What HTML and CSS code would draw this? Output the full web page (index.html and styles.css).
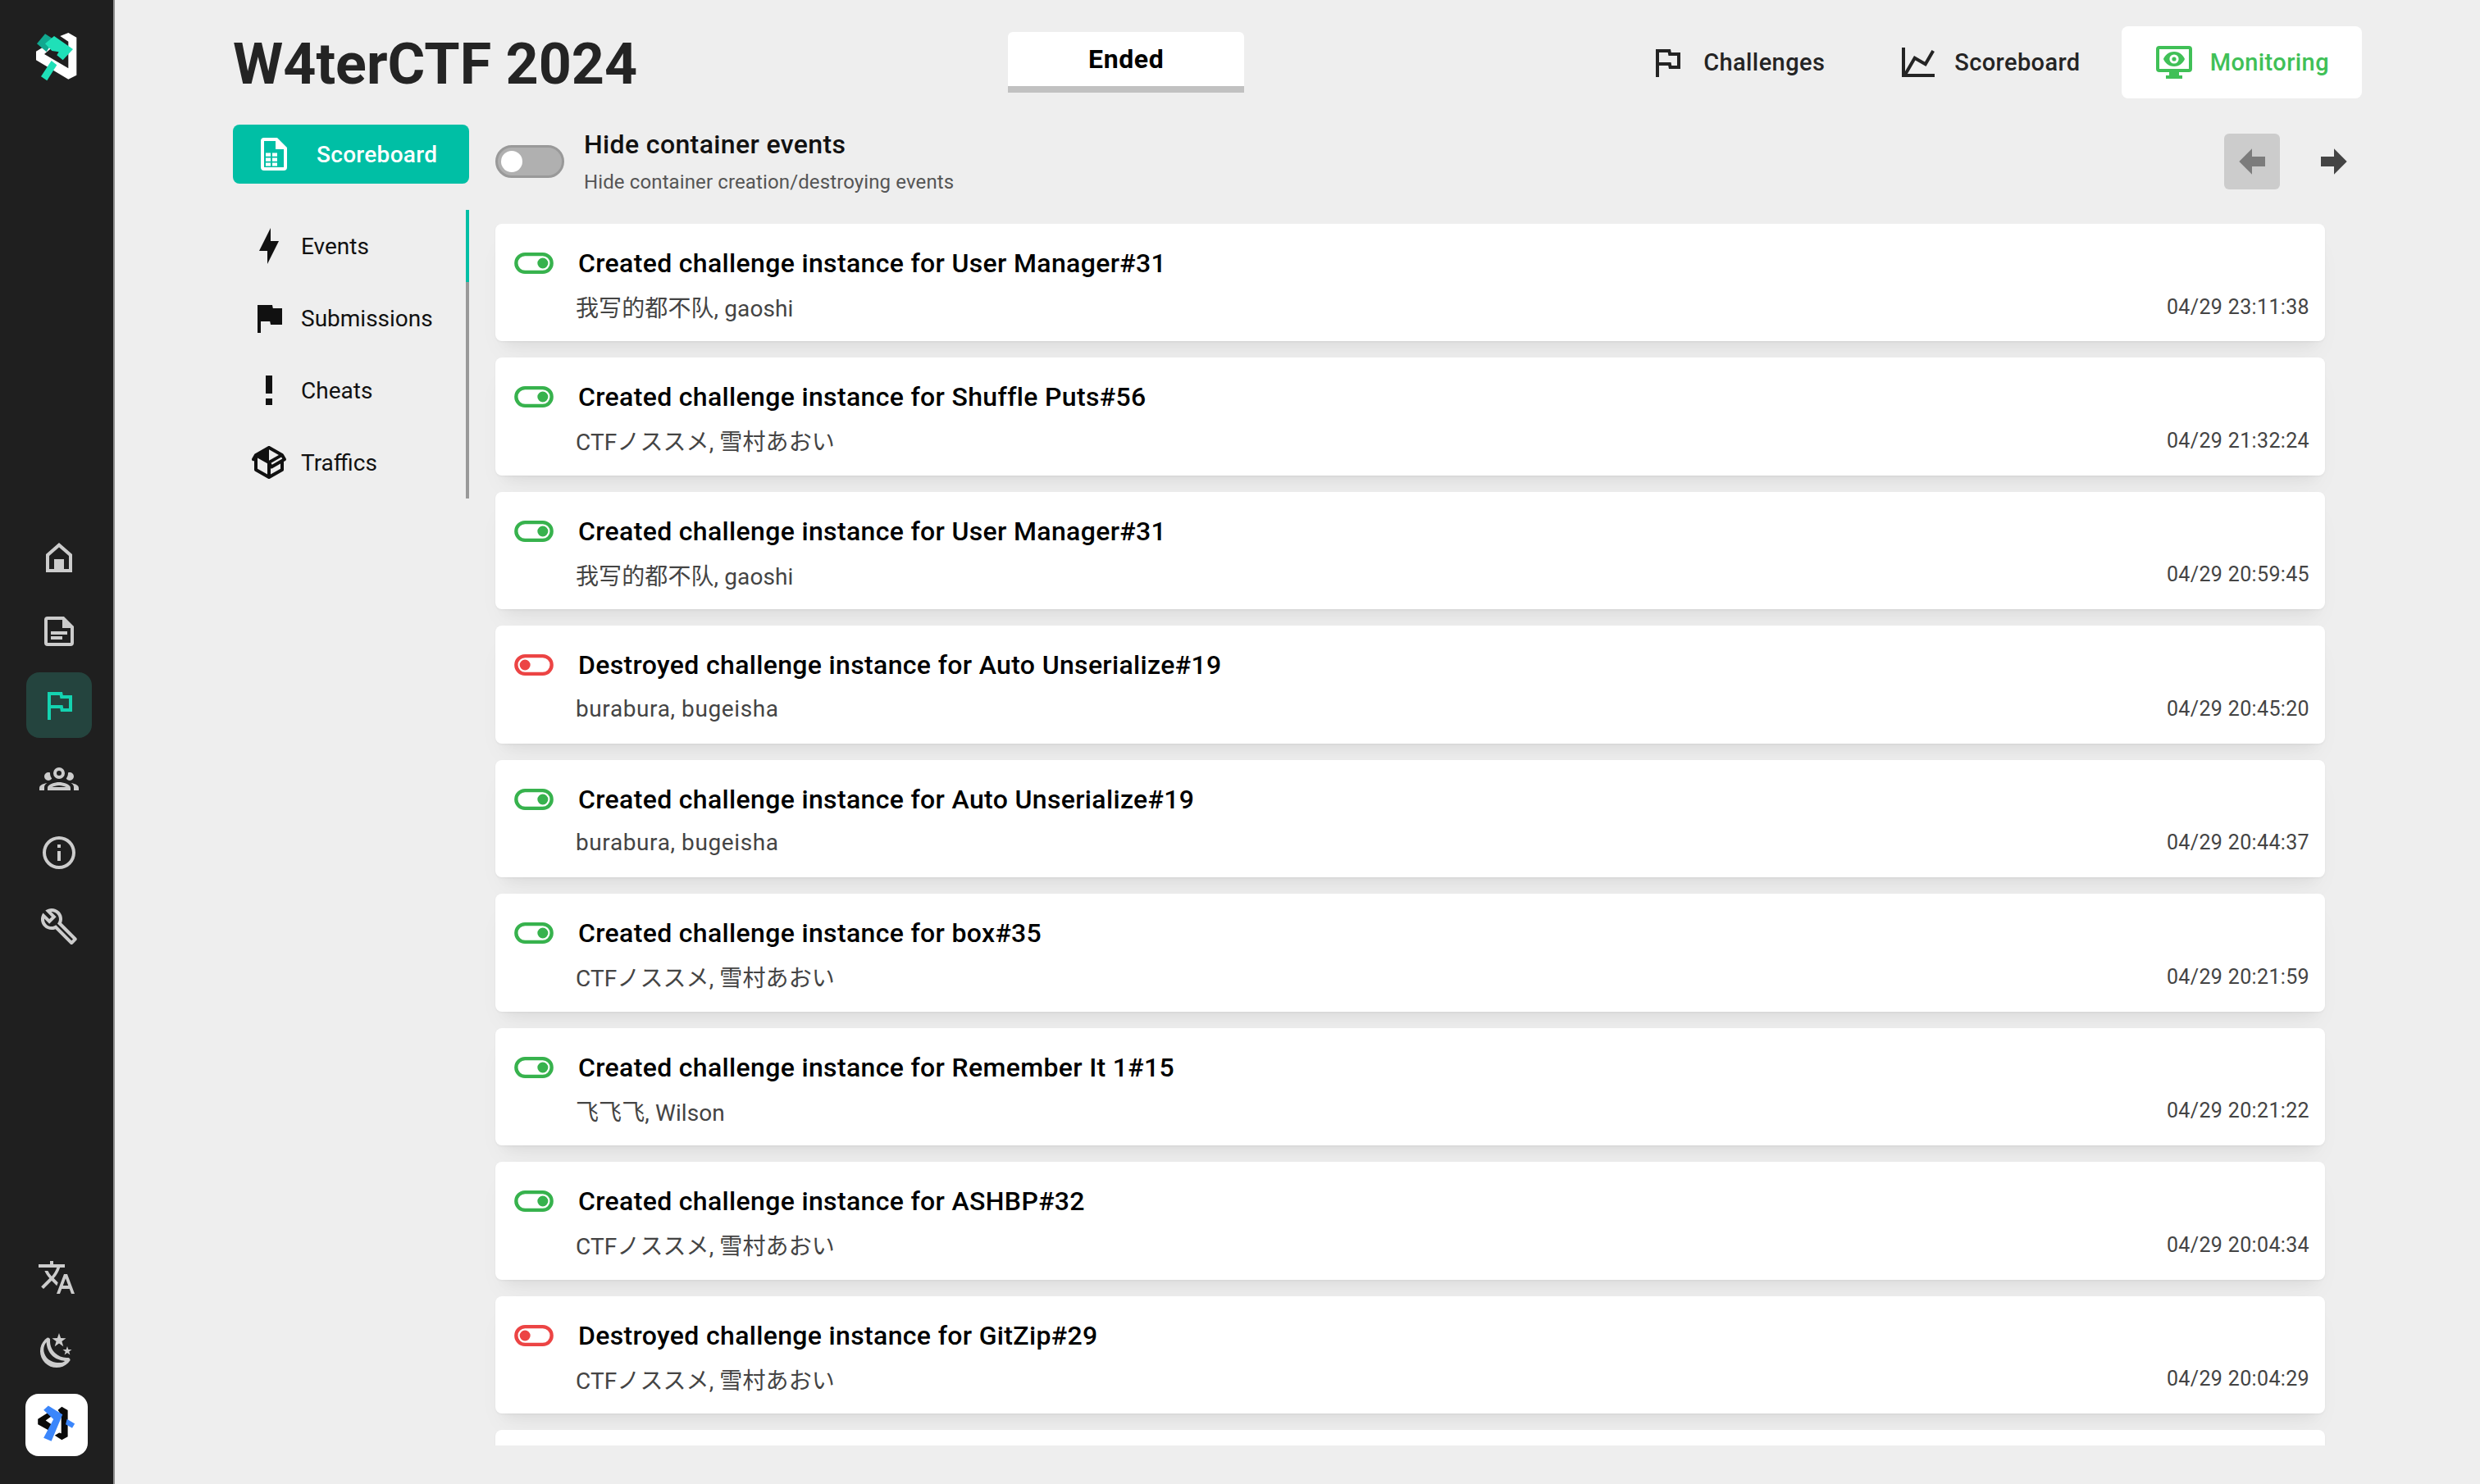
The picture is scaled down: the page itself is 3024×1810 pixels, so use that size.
FILE: index.html
```html
<!DOCTYPE html>
<html lang="en">
<head>
<meta charset="utf-8">
<title>W4terCTF 2024 - Monitoring</title>
<link rel="stylesheet" href="styles.css">
</head>
<body>
<svg class="defs" width="0" height="0" aria-hidden="true">
  <symbol id="tog-on" viewBox="0 0 24 24"><path fill-rule="evenodd" d="M7 6H17A6 6 0 0 1 17 18H7A6 6 0 0 1 7 6ZM7 8A4 4 0 0 0 7 16H17A4 4 0 0 0 17 8ZM17 9A3 3 0 1 1 17 15A3 3 0 1 1 17 9Z"/></symbol>
  <symbol id="tog-off" viewBox="0 0 24 24"><path fill-rule="evenodd" d="M7 6H17A6 6 0 0 1 17 18H7A6 6 0 0 1 7 6ZM7 8A4 4 0 0 0 7 16H17A4 4 0 0 0 17 8ZM7 9A3 3 0 1 1 7 15A3 3 0 1 1 7 9Z"/></symbol>
</svg>
<div class="app">
  <aside class="rail">
    <div class="rail-top">
      <svg class="logo" viewBox="0 0 240 240">
        <path fill="#fff" d="M130 42L160 30L190 47V185L160 200L42 130V98L80 75L96 88L72 108L160 160V62Z"/>
        <path fill="#11a88f" d="M45 70L75 34L108 55L80 100Z"/>
        <path fill="#1fe0b8" d="M75 70L108 42L177 90L140 130L118 112L125 100L100 96Z"/>
        <path fill="#1fe0b8" d="M60 190L98 132L118 148L82 205Z"/>
      </svg>
    </div>
    <nav class="rail-mid">
      <a class="rail-item"><svg class="ic" viewBox="0 0 24 24"><path fill-rule="evenodd" d="M12 3L20 10V21H4V10ZM12 5.7L6 11V19H9V13H15V19H18V11Z"/></svg></a>
      <a class="rail-item"><svg class="ic" viewBox="0 0 24 24"><path d="M15 3H5A2 2 0 0 0 3 5V19A2 2 0 0 0 5 21H19A2 2 0 0 0 21 19V9L15 3M19 19H5V5H14V10H19M17 14H7V12H17M14 17H7V15H14"/></svg></a>
      <a class="rail-item rail-active"><svg class="ic" viewBox="0 0 24 24"><path d="M12.36,6L12.76,8H18V14H14.64L14.24,12H7V6H12.36M14,4H5V21H7V14H12.6L13,16H20V6H14.4"/></svg></a>
      <a class="rail-item"><svg class="ic" viewBox="0 0 24 24"><path d="M12,5A3.5,3.5 0 0,0 8.5,8.5A3.5,3.5 0 0,0 12,12A3.5,3.5 0 0,0 15.5,8.5A3.5,3.5 0 0,0 12,5M12,7A1.5,1.5 0 0,1 13.5,8.5A1.5,1.5 0 0,1 12,10A1.5,1.5 0 0,1 10.5,8.5A1.5,1.5 0 0,1 12,7M5.5,8A2.5,2.5 0 0,0 3,10.5C3,11.44 3.53,12.25 4.29,12.68C4.65,12.88 5.06,13 5.5,13C5.94,13 6.35,12.88 6.71,12.68C7.08,12.47 7.39,12.17 7.62,11.81C6.89,10.86 6.5,9.7 6.5,8.5C6.5,8.41 6.5,8.31 6.5,8.22C6.2,8.08 5.86,8 5.5,8M18.5,8C18.14,8 17.8,8.08 17.5,8.22C17.5,8.31 17.5,8.41 17.5,8.5C17.5,9.7 17.11,10.86 16.38,11.81C16.5,12 16.63,12.15 16.78,12.3C16.94,12.45 17.1,12.58 17.29,12.68C17.65,12.88 18.06,13 18.5,13C18.94,13 19.35,12.88 19.71,12.68C20.47,12.25 21,11.44 21,10.5A2.5,2.5 0 0,0 18.5,8M12,14C9.66,14 5,15.17 5,17.5V19H19V17.5C19,15.17 14.34,14 12,14M4.71,14.55C2.78,14.78 0,15.76 0,17.5V19H3V17.07C3,16.06 3.69,15.22 4.71,14.55M19.29,14.55C20.31,15.22 21,16.06 21,17.07V19H24V17.5C24,15.76 21.22,14.78 19.29,14.55M12,16C13.53,16 15.24,16.5 16.23,17H7.77C8.76,16.5 10.47,16 12,16Z"/></svg></a>
      <a class="rail-item"><svg class="ic" viewBox="0 0 24 24"><path d="M11,9H13V7H11M12,20C7.59,20 4,16.41 4,12C4,7.59 7.59,4 12,4C16.41,4 20,7.59 20,12C20,16.41 16.41,20 12,20M12,2A10,10 0 0,0 2,12A10,10 0 0,0 12,22A10,10 0 0,0 22,12A10,10 0 0,0 12,2M11,17H13V11H11V17Z"/></svg></a>
      <a class="rail-item"><svg class="ic" viewBox="0 0 24 24"><path d="M22.61,19L13.53,9.91C14.46,7.57 14,4.81 12.11,2.91C9.81,0.61 6.21,0.4 3.66,2.26L7.5,6.11L6.08,7.5L2.25,3.69C0.39,6.23 0.6,9.84 2.9,12.13C4.76,14 7.47,14.46 9.79,13.59L18.9,22.7C19.29,23.09 19.92,23.09 20.31,22.7L22.61,20.4C23,20 23,19.39 22.61,19M19.61,20.59L10.15,11.13C9.54,11.58 8.86,11.85 8.15,11.95C6.79,12.15 5.36,11.74 4.32,10.7C3.37,9.76 2.93,8.5 3,7.26L6.09,10.35L10.33,6.11L7.24,3.02C8.5,2.95 9.73,3.39 10.68,4.33C11.76,5.41 12.17,6.9 11.92,8.29C11.8,9 11.5,9.66 11,10.25L20.5,19.75L19.61,20.59Z"/></svg></a>
    </nav>
    <div class="rail-bottom">
      <a class="rail-item"><svg class="ic" viewBox="0 0 24 24"><path d="M12.87,15.07L10.33,12.56L10.36,12.53C12.1,10.59 13.34,8.36 14.07,6H17V4H10V2H8V4H1V6H12.17C11.5,7.92 10.44,9.75 9,11.35C8.07,10.32 7.3,9.19 6.69,8H4.69C5.42,9.63 6.42,11.17 7.67,12.56L2.58,17.58L4,19L9,14L12.11,17.11L12.87,15.07M18.5,10H16.5L12,22H14L15.12,19H19.87L21,22H23L18.5,10M15.88,17L17.5,12.67L19.12,17H15.88Z"/></svg></a>
      <a class="rail-item"><svg class="ic" viewBox="0 0 24 24"><path fill-rule="evenodd" d="M17.75,4.09L15.22,6.03L16.13,9.09L13.5,7.28L10.87,9.09L11.78,6.03L9.25,4.09L12.44,4L13.5,1L14.56,4L17.75,4.09M21.25,11L19.61,12.25L20.2,14.23L18.5,13.06L16.8,14.23L17.39,12.25L15.75,11L17.81,10.95L18.5,9L19.19,10.95L21.25,11M18.97,15.95C19.8,15.87 20.69,17.05 20.16,17.8C19.84,18.25 19.5,18.67 19.08,19.07C15.17,23 8.84,23 4.94,19.07C1.03,15.17 1.03,8.83 4.94,4.93C5.34,4.53 5.76,4.17 6.21,3.85C6.96,3.32 8.14,4.21 8.06,5.04C7.79,7.9 8.75,10.87 10.95,13.06C13.14,15.26 16.1,16.22 18.97,15.95M17.06,17.94C14.19,17.78 11.1,16.62 9.07,14.53C7.04,12.44 5.92,9.42 5.82,6.55C3.53,9.07 3.58,12.94 6,15.96C8.2,18.6 14.5,20.3 17.06,17.94Z"/></svg></a>
      <div class="avatar">
        <svg class="avatar-logo" viewBox="0 0 240 240">
          <path fill="#0a0a0a" d="M125 62L140 50L163 63V165L140 178L113 160L130 150L138 152V82Z"/>
          <path fill="#0a0a0a" d="M48 97L88 72L102 85L78 103L100 118L88 140L48 118Z"/>
          <path fill="#3b86fb" d="M70 62L88 46L143 80L100 182L70 170L108 98Z"/>
          <path fill="#3b86fb" d="M160 97L190 115L180 132L155 118Z"/>
        </svg>
      </div>
    </div>
  </aside>

  <main class="main">
    <header class="head">
      <h1 class="title">W4terCTF 2024</h1>
      <div class="status">Ended</div>
      <nav class="top-nav">
        <a class="top-link"><svg class="ic" viewBox="0 0 24 24"><path d="M12.36,6L12.76,8H18V14H14.64L14.24,12H7V6H12.36M14,4H5V21H7V14H12.6L13,16H20V6H14.4"/></svg><span>Challenges</span></a>
        <a class="top-link"><svg class="ic" viewBox="0 0 24 24"><path d="M16,11.78L20.24,4.45L21.97,5.45L16.74,14.5L10.23,10.75L5.46,19H22V21H2V3H4V17.54L9.5,8L16,11.78Z"/></svg><span>Scoreboard</span></a>
        <a class="top-link top-active"><svg class="ic" viewBox="0 0 24 24"><path fill-rule="evenodd" d="M3 2H21A2 2 0 0 1 23 4V16A2 2 0 0 1 21 18H15V20H17V22H7V20H9V18H3A2 2 0 0 1 1 16V4A2 2 0 0 1 3 2ZM3 4V16H21V4ZM12 5.5C8.5 5.5 6.2 8 5.5 10C6.2 12 8.5 14.5 12 14.5C15.5 14.5 17.8 12 18.5 10C17.8 8 15.5 5.5 12 5.5ZM12 7.2A2.8 2.8 0 1 1 12 12.8A2.8 2.8 0 1 1 12 7.2ZM12 8.7A1.3 1.3 0 1 0 12 11.3A1.3 1.3 0 1 0 12 8.7Z"/></svg><span>Monitoring</span></a>
      </nav>
    </header>

    <div class="body">
      <div class="side">
        <a class="board-btn"><svg class="ic" viewBox="0 0 24 24"><path fill-rule="evenodd" d="M14 2H6A2 2 0 0 0 4 4V20A2 2 0 0 0 6 22H18A2 2 0 0 0 20 20V8ZM6 4H13V9H18V20H6ZM7 11.2H10V13.4H7ZM11 11.2H14V13.4H11ZM7 14.2H10V16.4H7ZM11 14.2H14V16.4H11ZM7 17.2H10V19.2H7ZM11 17.2H14V19.2H11Z"/></svg><span>Scoreboard</span></a>
        <ul class="tabs">
          <li class="tab tab-active"><span class="tab-icon"><svg class="ic" viewBox="0 0 24 24"><path d="M11 15H6L13 1V9H18L11 23V15Z"/></svg></span><span>Events</span></li>
          <li class="tab"><span class="tab-icon"><svg class="ic" viewBox="0 0 24 24"><path d="M14.4,6L14,4H5V21H7V14H12.6L13,16H20V6H14.4Z"/></svg></span><span>Submissions</span></li>
          <li class="tab"><span class="tab-icon"><svg class="ic" viewBox="0 0 24 24"><path d="M10 3H14V14H10V3M10 21V17H14V21H10Z"/></svg></span><span>Cheats</span></li>
          <li class="tab"><span class="tab-icon"><svg class="ic" viewBox="0 0 24 24"><path d="M2,10.96C1.5,10.68 1.35,10.07 1.63,9.59L3.13,7C3.24,6.8 3.41,6.66 3.6,6.58L11.43,2.18C11.59,2.06 11.79,2 12,2C12.21,2 12.41,2.06 12.57,2.18L20.47,6.62C20.66,6.72 20.82,6.88 20.91,7.08L22.36,9.6C22.64,10.08 22.47,10.69 22,10.96L21,11.54V16.5C21,16.88 20.79,17.21 20.47,17.38L12.57,21.82C12.41,21.94 12.21,22 12,22C11.79,22 11.59,21.94 11.43,21.82L3.53,17.38C3.21,17.21 3,16.88 3,16.5V10.96C2.7,11.13 2.32,11.14 2,10.96M12,4.15V4.15L12,10.85V10.85L17.96,7.5L12,4.15M5,15.91L11,19.29V12.58L5,9.21V15.91M19,15.91V12.69L14,15.59C13.67,15.77 13.3,15.76 13,15.6V19.29L19,15.91M13.85,13.36L20.13,9.73L19.55,8.72L13.27,12.35L13.85,13.36Z"/></svg></span><span>Traffics</span></li>
        </ul>
      </div>

      <section class="content">
        <div class="toolbar">
          <div class="switch-wrap">
            <span class="switch"><span class="thumb"></span></span>
            <div class="switch-text">
              <div class="switch-label">Hide container events</div>
              <div class="switch-desc">Hide container creation/destroying events</div>
            </div>
          </div>
          <div class="pager">
            <button class="page-btn page-disabled"><svg class="ic" viewBox="0 0 24 24"><path d="M20,9V15H12V19.84L4.16,12L12,4.16V9H20Z"/></svg></button>
            <button class="page-btn"><svg class="ic" viewBox="0 0 24 24"><path d="M4,15V9H12V4.16L19.84,12L12,19.84V15H4Z"/></svg></button>
          </div>
        </div>

        <div class="list">
          <article class="card"><div class="card-top"><svg class="tog on"><use href="#tog-on"/></svg><span class="card-title">Created challenge instance for User Manager#31</span></div><div class="card-bottom"><span class="card-sub">我写的都不队, gaoshi</span><time class="card-time">04/29 23:11:38</time></div></article>
          <article class="card"><div class="card-top"><svg class="tog on"><use href="#tog-on"/></svg><span class="card-title">Created challenge instance for Shuffle Puts#56</span></div><div class="card-bottom"><span class="card-sub">CTFノススメ, 雪村あおい</span><time class="card-time">04/29 21:32:24</time></div></article>
          <article class="card"><div class="card-top"><svg class="tog on"><use href="#tog-on"/></svg><span class="card-title">Created challenge instance for User Manager#31</span></div><div class="card-bottom"><span class="card-sub">我写的都不队, gaoshi</span><time class="card-time">04/29 20:59:45</time></div></article>
          <article class="card"><div class="card-top"><svg class="tog off"><use href="#tog-off"/></svg><span class="card-title">Destroyed challenge instance for Auto Unserialize#19</span></div><div class="card-bottom"><span class="card-sub card-sub-latin">burabura, bugeisha</span><time class="card-time">04/29 20:45:20</time></div></article>
          <article class="card"><div class="card-top"><svg class="tog on"><use href="#tog-on"/></svg><span class="card-title">Created challenge instance for Auto Unserialize#19</span></div><div class="card-bottom"><span class="card-sub card-sub-latin">burabura, bugeisha</span><time class="card-time">04/29 20:44:37</time></div></article>
          <article class="card"><div class="card-top"><svg class="tog on"><use href="#tog-on"/></svg><span class="card-title">Created challenge instance for box#35</span></div><div class="card-bottom"><span class="card-sub">CTFノススメ, 雪村あおい</span><time class="card-time">04/29 20:21:59</time></div></article>
          <article class="card"><div class="card-top"><svg class="tog on"><use href="#tog-on"/></svg><span class="card-title">Created challenge instance for Remember It 1#15</span></div><div class="card-bottom"><span class="card-sub">飞飞飞, Wilson</span><time class="card-time">04/29 20:21:22</time></div></article>
          <article class="card"><div class="card-top"><svg class="tog on"><use href="#tog-on"/></svg><span class="card-title">Created challenge instance for ASHBP#32</span></div><div class="card-bottom"><span class="card-sub">CTFノススメ, 雪村あおい</span><time class="card-time">04/29 20:04:34</time></div></article>
          <article class="card"><div class="card-top"><svg class="tog off"><use href="#tog-off"/></svg><span class="card-title">Destroyed challenge instance for GitZip#29</span></div><div class="card-bottom"><span class="card-sub">CTFノススメ, 雪村あおい</span><time class="card-time">04/29 20:04:29</time></div></article>
          <article class="card"></article>
        </div>
      </section>
    </div>
  </main>
</div>
</body>
</html>
```

FILE: styles.css
```css
* { box-sizing: border-box; }
html, body { margin: 0; padding: 0; }
body {
  height: 1810px;
  overflow: hidden;
  background: #eeeeee;
  color: #000;
  font-family: Roboto, "Noto Sans CJK SC", sans-serif;
}
.defs { position: absolute; }
.ic { display: block; width: 48px; height: 48px; fill: currentColor; flex: none; }

.app { display: flex; height: 1810px; }

/* left rail */
.rail {
  width: 140px;
  flex: none;
  display: grid;
  grid-template-rows: 1fr auto 1fr;
  background: #1f1f1f;
  border-right: 2px solid #8d8d8d;
  color: #cccccc;
}
.rail-top { padding: 30px 0 0 30px; }
.logo { display: block; width: 80px; height: 80px; }
.rail-mid { display: flex; flex-direction: column; gap: 10px; padding-left: 32px; }
.rail-item {
  width: 80px; height: 80px;
  display: flex; align-items: center; justify-content: center;
  border-radius: 16px;
}
.rail-active { background: #24443e; color: #14d3b0; }
.rail-bottom {
  align-self: end;
  display: flex; flex-direction: column; gap: 10px;
  padding: 0 0 34px 29px;
}
.avatar {
  width: 76px; height: 76px;
  margin: 2px 0 0 2px;
  background: #fff;
  border-radius: 16px;
  display: flex; align-items: center; justify-content: center;
}
.avatar-logo { display: block; width: 76px; height: 76px; }

/* main */
.main { flex: 1; min-width: 0; padding: 32px 144px 0 144px; }
.head { display: flex; align-items: center; justify-content: space-between; height: 88px; }
.title { margin: 3px 0 0; font-size: 70px; line-height: 88px; font-weight: 700; color: #242424; white-space: nowrap; }
.status {
  width: 288px; height: 74px;
  background: #fff;
  border-bottom: 8px solid #c1c1c1;
  border-radius: 6px 6px 0 0;
  font-size: 32px; font-weight: 700; line-height: 66px; text-align: center;
  letter-spacing: .6px;
}
.top-nav { display: flex; gap: 10px; }
.top-link {
  display: flex; align-items: center; gap: 20px;
  height: 88px; padding: 0 40px;
  color: #242424;
  font-size: 29px; font-weight: 500;
  letter-spacing: .4px;
  border-radius: 8px;
}
.top-active { background: #fff; color: #40c057; }

.body { display: grid; grid-template-columns: 288px 1fr; column-gap: 32px; margin-top: 32px; }

.board-btn {
  display: flex; align-items: center; gap: 28px;
  height: 72px; padding-left: 26px;
  background: #00bfa5; color: #fff;
  border-radius: 8px;
  font-size: 28px; font-weight: 500;
  letter-spacing: .3px;
}
.tabs { list-style: none; margin: 32px 0 0; padding: 0; border-right: 4px solid #999999; }
.tab { display: flex; align-items: center; height: 88px; font-size: 28px; color: #111; position: relative; }
.tab-active::after { content: ""; position: absolute; top: 0; bottom: 0; right: -4px; width: 4px; background: #00bfa5; }
.tab-icon { width: 83px; display: flex; justify-content: flex-end; padding-right: 15px; }

.toolbar { display: flex; align-items: center; justify-content: space-between; height: 90px; }
.switch-wrap { display: flex; align-items: center; gap: 24px; }
.switch {
  width: 84px; height: 40px;
  border-radius: 20px;
  background: #b0b0b0;
  border: 3px solid #999;
  display: flex; align-items: center; padding-left: 4px;
}
.thumb { width: 26px; height: 26px; border-radius: 50%; background: #fff; }
.switch-label { font-size: 32px; line-height: 44px; font-weight: 470; color: #111; letter-spacing: .37px; }
.switch-desc { font-size: 24px; line-height: 36px; color: #555; margin-top: 6px; letter-spacing: .12px; }
.pager { display: flex; gap: 32px; }
.page-btn {
  width: 68px; height: 68px; padding: 0;
  border: 0; border-radius: 6px;
  background: transparent; color: #444;
  display: flex; align-items: center; justify-content: center;
}
.page-disabled { background: #cccccc; color: #7c7c7c; }

.list {
  height: 1490px;
  margin: 31px 25px 0 -20px;
  padding: 0 20px;
  overflow: hidden;
  display: flex; flex-direction: column; gap: 20px;
}
.card {
  flex: none;
  height: 143.45px;
  background: #fff;
  border-radius: 8px;
  padding: 18px 19px 0 21px;
  box-shadow: 0 1px 3px rgba(0,0,0,.05), 0 20px 30px -10px rgba(0,0,0,.05), 0 14px 14px -10px rgba(0,0,0,.04);
}
.card-top { display: flex; align-items: center; gap: 28px; height: 60px; }
.tog { width: 52px; height: 52px; flex: none; fill: currentColor; }
.on { color: #37b24d; }
.off { color: #ec4444; }
.card-title { font-size: 32px; line-height: 44px; font-weight: 470; color: #000; letter-spacing: .34px; }
.card-bottom { display: flex; align-items: center; justify-content: space-between; height: 36px; margin: 5px 0 0 77px; }
.card-sub { font-size: 28px; color: #444; letter-spacing: .1px; }
.card-sub-latin { letter-spacing: .6px; }
.card-time { font-size: 25px; color: #444; letter-spacing: .35px; }
```
